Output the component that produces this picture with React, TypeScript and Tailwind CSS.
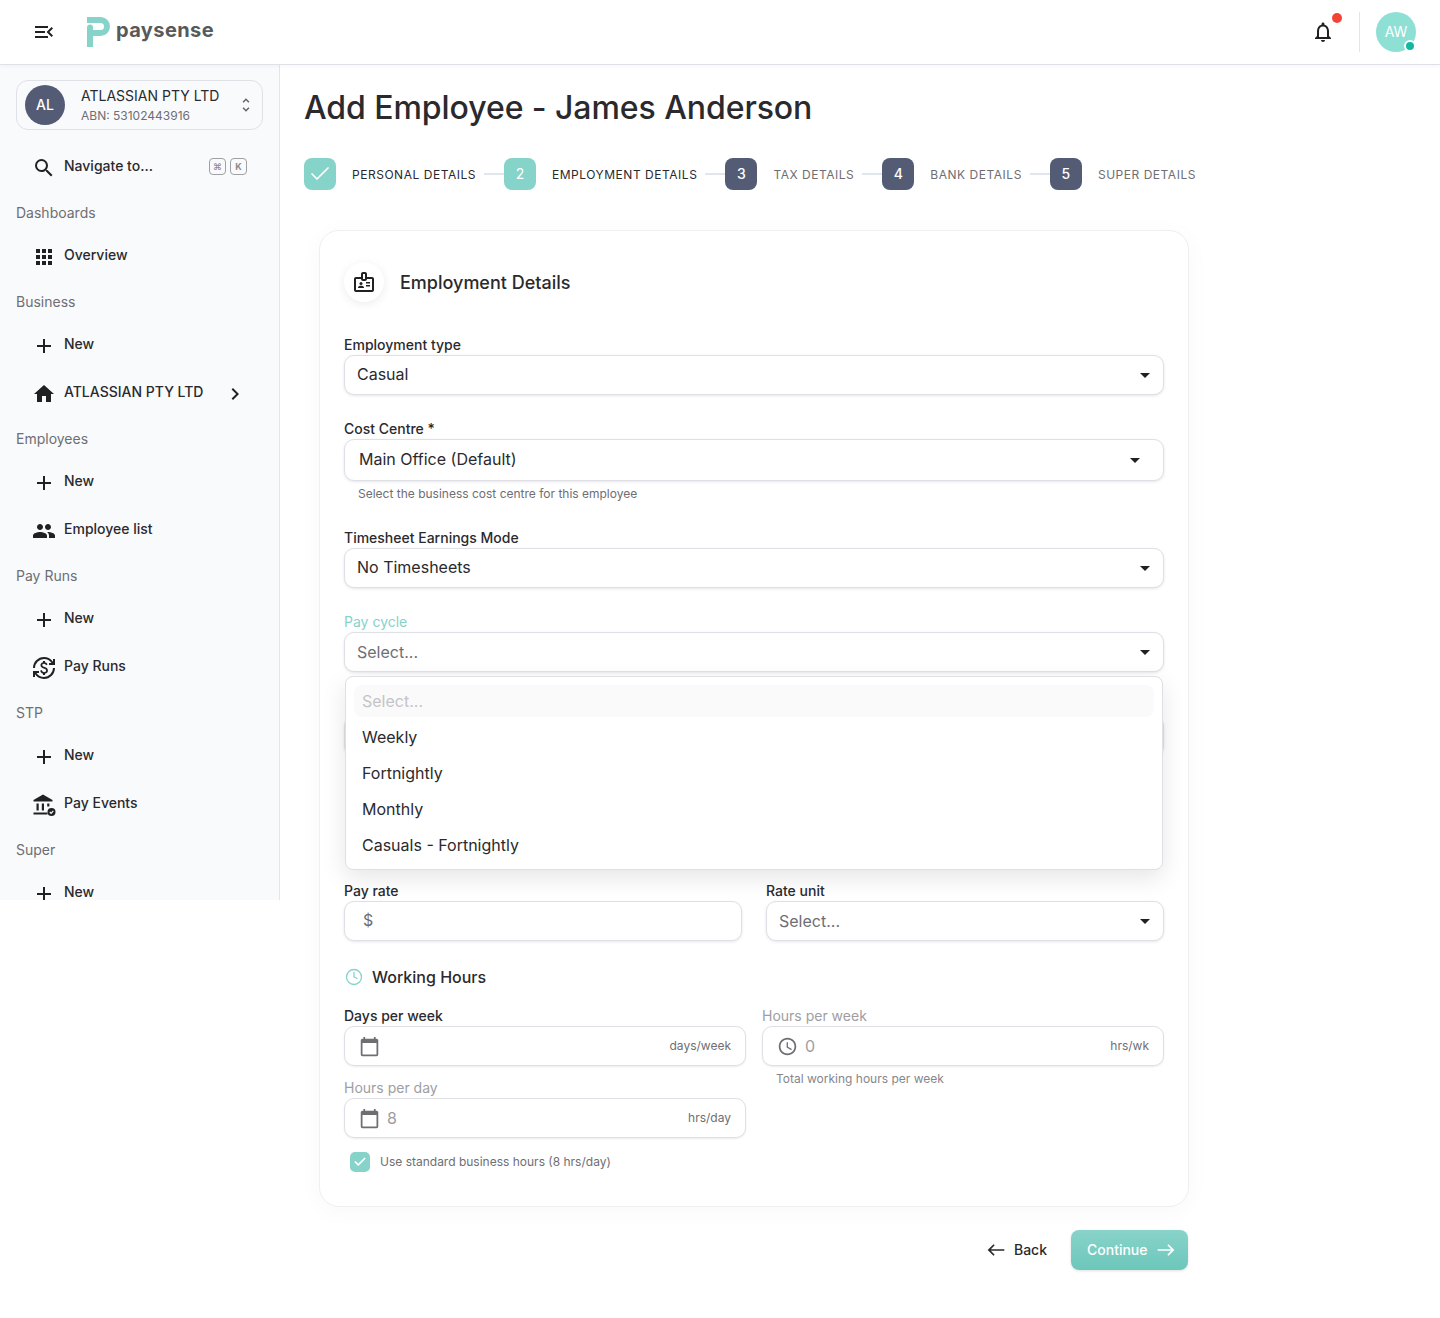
import type { ReactNode } from 'react';
import { Check, Clock } from 'lucide-react';
import {
  MdAdd,
  MdApps,
  MdArrowDropDown,
  MdCalendarToday,
  MdChevronRight,
  MdCurrencyExchange,
  MdEast,
  MdHome,
  MdMenuOpen,
  MdOutlineAccessTime,
  MdOutlineBadge,
  MdOutlineNotifications,
  MdPeople,
  MdSearch,
  MdUnfoldMore,
  MdWest,
} from 'react-icons/md';

const PayEventsIcon = () => (
  <svg viewBox="0 0 24 24" className="w-6 h-6 text-[#212121]" fill="currentColor">
    <path d="M11 1.5 1.5 7v1.5h19V7z" />
    <rect x="4.5" y="10.5" width="2.2" height="7" />
    <rect x="9.8" y="10.5" width="2.2" height="7" />
    <rect x="15.2" y="10.5" width="2.2" height="3" />
    <rect x="1.5" y="19.5" width="14" height="2" />
    <circle cx="19.5" cy="19" r="4" />
    <path d="m17.8 19 1.3 1.3 2.2-2.4" fill="none" stroke="#f9fafc" strokeWidth="1.2" />
  </svg>
);

const Logo = () => (
  <svg viewBox="0 0 24 30" className="w-6 h-[30px]" fill="none" stroke="#86d3c9" strokeWidth="6">
    <path d="M1 3h13.5a6.5 6.5 0 0 1 0 13H7" />
    <path d="M4 10.5v19.5" strokeLinecap="round" />
  </svg>
);

const Label = ({ children }: { children: ReactNode }) => (
  <p className="h-9 mt-[5px] flex items-center pl-4 text-sm text-[#6e6e73]">{children}</p>
);

const NavItem = ({ icon, label, chevron }: { icon: ReactNode; label: string; chevron?: boolean }) => (
  <div className="h-12 flex items-center pl-8 pr-8 text-sm font-medium text-[#2a2a2e]">
    <span className="w-6 h-6 mt-1 mr-2 flex items-center justify-center shrink-0">{icon}</span>
    <span>{label}</span>
    {chevron && <MdChevronRight className="ml-auto mt-1 w-6 h-6 text-[#212121]" />}
  </div>
);

const plus = <MdAdd className="w-7 h-7 text-[#212121]" />;

const Sidebar = () => (
  <aside className="w-[280px] h-[835px] shrink-0 bg-[#f9fafc] border-r border-[#e4e5ea] overflow-hidden pt-[15px]">
    <div className="mx-4 w-[247px] h-[50px] rounded-xl border border-[#dfe1e7] flex items-center pl-2 pr-[7px]">
      <span className="w-10 h-10 rounded-full bg-[#545c75] text-white text-sm font-medium flex items-center justify-center">
        AL
      </span>
      <div className="ml-4 flex-1 pt-0.5">
        <p className="text-sm leading-[18px] text-[#2a2a2e]">ATLASSIAN PTY LTD</p>
        <p className="mt-0.5 text-xs leading-[18px] text-[#6e6e73]">ABN: 53102443916</p>
      </div>
      <MdUnfoldMore className="w-[18px] h-[18px] text-[#616161]" />
    </div>

    <div className="mt-3 h-12 flex items-center pl-8 pr-8 text-sm font-medium text-[#2a2a2e]">
      <MdSearch className="w-6 h-6 mt-1 mr-2 text-[#212121]" />
      <span>Navigate to...</span>
      <span className="ml-auto flex gap-1">
        <kbd className="w-[17px] h-[17px] rounded border border-[#a0a0a4] text-[9px] leading-none text-[#8a8a8e] flex items-center justify-center font-['Inter',sans-serif]">
          ⌘
        </kbd>
        <kbd className="w-[17px] h-[17px] rounded border border-[#a0a0a4] text-[9px] font-bold leading-none text-[#8a8a8e] flex items-center justify-center font-['Inter',sans-serif]">
          K
        </kbd>
      </span>
    </div>

    <Label>Dashboards</Label>
    <NavItem icon={<MdApps className="w-7 h-7 text-[#212121]" />} label="Overview" />
    <Label>Business</Label>
    <NavItem icon={plus} label="New" />
    <NavItem icon={<MdHome className="w-6 h-6 text-[#212121]" />} label="ATLASSIAN PTY LTD" chevron />
    <Label>Employees</Label>
    <NavItem icon={plus} label="New" />
    <NavItem icon={<MdPeople className="w-7 h-7 text-[#212121]" />} label="Employee list" />
    <Label>Pay Runs</Label>
    <NavItem icon={plus} label="New" />
    <NavItem icon={<MdCurrencyExchange className="w-6 h-6 text-[#212121]" />} label="Pay Runs" />
    <Label>STP</Label>
    <NavItem icon={plus} label="New" />
    <NavItem icon={<PayEventsIcon />} label="Pay Events" />
    <Label>Super</Label>
    <NavItem icon={plus} label="New" />
  </aside>
);

const Step = ({ n, label, state, first }: { n: ReactNode; label: string; state: 'done' | 'todo'; first?: boolean }) => (
  <div className="flex items-center">
    {!first && <span className="w-5 h-[2px] ml-2 bg-[#e1e5ec]" />}
    <span
      className={
        state === 'done'
          ? 'w-8 h-8 rounded-lg bg-[#86d3c9] text-white text-sm flex items-center justify-center'
          : 'w-8 h-8 rounded-lg bg-[#545c75] text-white text-sm font-medium flex items-center justify-center'
      }
    >
      {n}
    </span>
    <span
      className={
        state === 'done'
          ? 'ml-4 pt-0.5 text-xs tracking-[0.044em] text-[#2a2a2e]'
          : 'ml-4 pt-0.5 text-xs tracking-[0.044em] text-[#6e6e73]'
      }
    >
      {label}
    </span>
  </div>
);

const FieldLabel = ({ children, muted }: { children: ReactNode; muted?: boolean }) => (
  <p className={`h-5 text-sm leading-5 ${muted ? 'text-[#9e9ea3]' : 'font-medium text-[#2a2a2e]'}`}>{children}</p>
);

const selectBox =
  'rounded-[10px] border border-[#dfe0e6] bg-white shadow-[0_1px_3px_rgba(0,0,0,0.1)] flex items-center text-base';

const SelectField = ({
  value,
  placeholder,
  tall,
}: {
  value: string;
  placeholder?: boolean;
  tall?: boolean;
}) => (
  <div className={`${selectBox} ${tall ? 'h-[42px] pl-[14px] pr-4' : 'h-10 pl-3 pr-[6px]'}`}>
    <span className={placeholder ? 'pb-px text-[#6e6e73]' : 'pb-0.5 text-[#2a2a2e]'}>{value}</span>
    <MdArrowDropDown className="ml-auto w-6 h-6 text-[#212121]" />
  </div>
);

const UnitField = ({ icon, value, unit }: { icon: ReactNode; value?: string; unit: string }) => (
  <div className="h-10 rounded-[10px] border border-[#dfe0e6] bg-white shadow-[0_1px_2px_rgba(0,0,0,0.08)] flex items-center pl-3 pr-[14px]">
    <span className="w-6 h-6 flex items-center justify-center text-[#6e6e73]">{icon}</span>
    {value && <span className="ml-[6px] text-base text-[#9e9ea3]">{value}</span>}
    <span className="ml-auto text-xs text-[#6e6e73]">{unit}</span>
  </div>
);

const PayCycleMenu = () => (
  <div className="absolute z-10 left-px right-px top-[calc(100%+4px)] h-[194px] rounded-lg border border-[#dfe0e6] bg-white shadow-[0_8px_24px_rgba(0,0,0,0.1)] px-2 pt-2 text-base text-[#2a2a2e]">
    <div className="h-[32px] rounded-lg bg-[#fafafb] flex items-center px-2 text-[#c4c4c8]">Select...</div>
    {['Weekly', 'Fortnightly', 'Monthly', 'Casuals - Fortnightly'].map((opt, i) => (
      <div key={opt} className={`h-9 flex items-center px-2 ${i === 0 ? 'mt-[2px]' : ''}`}>
        {opt}
      </div>
    ))}
  </div>
);

const EmploymentCard = () => (
  <div className="ml-[15px] w-[870px] rounded-[20px] border border-[#eeeff2] bg-white shadow-[0_4px_24px_rgba(0,0,0,0.03)] px-6 pt-[31px] pb-[34px]">
    <div className="flex items-center gap-4">
      <span className="w-10 h-10 rounded-full bg-white shadow-[0_2px_10px_rgba(0,0,0,0.08)] flex items-center justify-center">
        <MdOutlineBadge className="w-6 h-6 text-[#212121]" />
      </span>
      <h2 className="mt-px text-lg font-medium text-[#2a2a2e]">Employment Details</h2>
    </div>

    <div className="mt-[33px] flex flex-col gap-6">
      <div>
        <FieldLabel>Employment type</FieldLabel>
        <SelectField value="Casual" />
      </div>
      <div>
        <FieldLabel>Cost Centre *</FieldLabel>
        <SelectField value="Main Office (Default)" tall />
        <p className="h-[23px] pt-1 pl-[14px] text-xs leading-[18px] text-[#6e6e73]">
          Select the business cost centre for this employee
        </p>
      </div>
      <div>
        <FieldLabel>Timesheet Earnings Mode</FieldLabel>
        <SelectField value="No Timesheets" />
      </div>
      <div className="relative">
        <p className="h-5 text-sm leading-5 text-[#86d3c9]">Pay cycle</p>
        <SelectField value="Select..." placeholder />
        <PayCycleMenu />
      </div>
      {/* rows sitting under the open menu */}
      <div>
        <div className="h-5" />
        <div className={`${selectBox} h-10`} />
      </div>
      <div className="h-[77px]" />
      <div className="grid grid-cols-2 gap-6">
        <div>
          <FieldLabel>Pay rate</FieldLabel>
          <div className={`${selectBox} h-10 pl-[18px] pb-0.5 text-[#6e6e73]`}>$</div>
        </div>
        <div>
          <FieldLabel>Rate unit</FieldLabel>
          <SelectField value="Select..." placeholder />
        </div>
      </div>
    </div>

    <div className="mt-6 h-6 flex items-center text-base font-medium text-[#2a2a2e]">
      <Clock className="w-[18px] h-[18px] ml-px mr-[9px] text-[#86d3c9]" strokeWidth={1.75} />
      Working Hours
    </div>

    <div className="mt-[17px] grid grid-cols-2 gap-x-4">
      <div className="flex flex-col gap-3">
        <div>
          <FieldLabel>Days per week</FieldLabel>
          <UnitField icon={<MdCalendarToday className="w-[21px] h-[21px]" />} unit="days/week" />
        </div>
        <div>
          <FieldLabel muted>Hours per day</FieldLabel>
          <UnitField icon={<MdCalendarToday className="w-[21px] h-[21px]" />} value="8" unit="hrs/day" />
        </div>
      </div>
      <div>
        <FieldLabel muted>Hours per week</FieldLabel>
        <UnitField icon={<MdOutlineAccessTime className="w-[21px] h-[21px]" />} value="0" unit="hrs/wk" />
        <p className="pt-1 pl-[14px] text-xs leading-[18px] text-[#86868b]">Total working hours per week</p>
      </div>
    </div>

    <div className="mt-[14px] ml-[6px] flex items-center gap-[10px]">
      <span className="w-5 h-5 rounded-[5px] bg-[#86d3c9] flex items-center justify-center">
        <Check className="w-[14px] h-[14px] text-white" strokeWidth={3} />
      </span>
      <span className="text-xs text-[#6e6e73]">Use standard business hours (8 hrs/day)</span>
    </div>
  </div>
);

export default function App() {
  return (
    <div className="min-h-[1318px] bg-white font-['Inter',sans-serif]">
      <header className="relative z-20 h-[65px] bg-white border-b border-[#dfe1e7] shadow-[0_2px_4px_rgba(0,0,0,0.03)] flex items-center pl-8 pr-6">
        <MdMenuOpen className="w-6 h-6 text-[#212121]" />
        <div className="ml-[30px] flex items-start">
          <Logo />
          <span className="ml-[6px] -mt-px text-xl font-bold tracking-[0.02em] text-[#58595b]">paysense</span>
        </div>
        <div className="ml-auto flex items-center">
          <span className="relative w-6 h-6">
            <MdOutlineNotifications className="w-6 h-6 text-[#212121]" />
            <span className="absolute -top-[7px] left-[21px] w-[10px] h-[10px] rounded-full bg-[#f44336]" />
          </span>
          <span className="ml-6 w-px h-10 bg-[#e4e5ea]" />
          <span className="relative ml-4 w-10 h-10 rounded-full bg-[#8fe0d4] text-white text-sm flex items-center justify-center">
            AW
            <span className="absolute right-0 bottom-0 w-[12px] h-[12px] rounded-full bg-[#14b8a0] border-2 border-white" />
          </span>
        </div>
      </header>

      <div className="flex items-start">
        <Sidebar />
        <main className="flex-1 pl-6 pt-[23px] pb-12">
          <h1 className="text-[32px] leading-10 tracking-[-0.07px] font-medium text-[#2a2a2e]">
            Add Employee - James Anderson
          </h1>

          <div className="mt-[30px] mb-10 flex items-center">
            <Step first n={<Check className="w-6 h-6" strokeWidth={1.75} />} label="PERSONAL DETAILS" state="done" />
            <Step n="2" label="EMPLOYMENT DETAILS" state="done" />
            <Step n="3" label="TAX DETAILS" state="todo" />
            <Step n="4" label="BANK DETAILS" state="todo" />
            <Step n="5" label="SUPER DETAILS" state="todo" />
          </div>

          <EmploymentCard />

          <div className="mt-[23px] w-[884px] flex items-center justify-end gap-6">
            <button className="h-10 flex items-center gap-2 text-sm font-medium text-[#2a2a2e]">
              <MdWest className="w-5 h-5" />
              Back
            </button>
            <button className="h-10 w-[117px] rounded-lg bg-gradient-to-b from-[#88d3ca] to-[#6cc7bb] shadow-[0_1px_3px_rgba(0,0,0,0.12)] flex items-center pl-4 gap-2 text-sm font-medium text-white">
              Continue
              <MdEast className="w-5 h-5" />
            </button>
          </div>
        </main>
      </div>
    </div>
  );
}
